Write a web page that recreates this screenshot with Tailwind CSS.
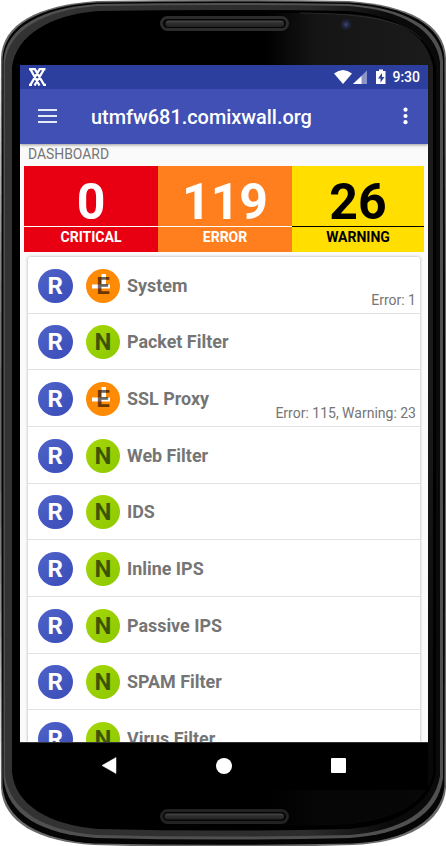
<!DOCTYPE html>
<html lang="en">
<head>
<meta charset="utf-8">
<title>Dashboard</title>
<script src="https://cdn.jsdelivr.net/npm/@tailwindcss/browser@4"></script>
</head>
<body class="bg-white overflow-hidden">
<div class="relative w-[446px] h-[846px] overflow-hidden font-[Roboto,'Noto_Sans',sans-serif]">
  <svg class="absolute inset-0" width="446" height="846" viewBox="0 0 446 846">
    <defs>
      <linearGradient id="face" x1="0" x2="1" y1="0" y2="0">
        <stop offset="0" stop-color="#000"/><stop offset=".6" stop-color="#000"/><stop offset=".72" stop-color="#151515"/><stop offset="1" stop-color="#1b1b1b"/>
      </linearGradient>
      <linearGradient id="fade" x1="0" x2="0" y1="0" y2="1">
        <stop offset="0" stop-color="#000" stop-opacity="0"/><stop offset=".45" stop-color="#000" stop-opacity="0"/><stop offset=".95" stop-color="#000" stop-opacity=".75"/>
      </linearGradient>
      <linearGradient id="pill" x1="0" x2="0" y1="0" y2="1">
        <stop offset="0" stop-color="#484848"/><stop offset=".4" stop-color="#303030"/><stop offset="1" stop-color="#222"/>
      </linearGradient>
      <linearGradient id="rim" x1="0" x2="1" y1="0" y2="0">
        <stop offset="0" stop-color="#333"/><stop offset=".7" stop-color="#2c2c2c"/><stop offset=".88" stop-color="#0a0a0a"/><stop offset="1" stop-color="#0a0a0a"/>
      </linearGradient>
      <radialGradient id="lens"><stop offset="0" stop-color="#40486e"/><stop offset=".5" stop-color="#20263f"/><stop offset="1" stop-color="#16171c"/></radialGradient>
    </defs>
    <path d="M97 1Q223-1 349 1C408 5 445 24 446 58Q447 423 446 788C443 822 408 843 352 845Q223 849 94 845C38 842 3 822 1 788Q-1 423 1 58C2 24 38 5 97 1Z" fill="#6a6a6a"/>
    <path d="M97 2.500Q223 .5 349 2.500C406 6 443 25 444.500 59Q445.500 423 444.500 786C441 820 406 841 352 843.500Q223 846 94 843.500C40 840 5 820 2.500 786Q.5 423 2.500 59C4 25 40 6 97 2.500Z" fill="#050505"/>
    <path d="M97 4Q223 2 349 4C404 8 440 27 443 60V778C438 815 404 834 350 838Q223 841 96 838C42 834 7 815 3.500 778V60C6 27 42 8 97 4Z" fill="#505050"/>
    <path d="M97 6Q223 4 349 6C401 10 436 29 440 62V776C434 811 401 831 350 835Q223 838 96 835C45 831 10 811 5 776V62C9 29 45 10 97 6Z" fill="url(#rim)"/>
    <path d="M98 11Q223 9 348 11C397 15 430 36 436 67V772C430 805 398 825 348 829Q223 832 98 829C49 825 15 805 12 772V67C16 36 49 15 98 11Z" fill="#000"/>
    <path d="M98 14Q223 11 348 14C398 17 427 34 433 67V772C428 800 398 819 348 824Q223 828 98 824C50 819 17 800 13 772V67C16 34 50 17 98 14Z" fill="url(#face)"/>
    <path d="M98 14Q223 11 348 14C398 17 427 34 433 67V772C428 800 398 819 348 824Q223 828 98 824C50 819 17 800 13 772V67C16 34 50 17 98 14Z" fill="url(#fade)"/>
    <path d="M300 13Q400 13 421 39" fill="none" stroke="#333" stroke-width=".7"/>
    <rect x="161.500" y="17.500" width="126" height="12" rx="6" fill="#050505" stroke="#2c2c2c" stroke-width="3"/>
    <rect x="165.500" y="20.500" width="118.500" height="6.500" rx="3.200" fill="url(#pill)"/>
    <rect x="161.500" y="810.500" width="126" height="12" rx="6" fill="#050505" stroke="#222" stroke-width="3"/>
    <rect x="164.500" y="813.500" width="119.500" height="6" rx="3" fill="url(#pill)"/>
    <circle cx="346" cy="24.500" r="6" fill="url(#lens)"/>
  </svg>

  <div class="relative ml-[20px] mt-[65px] w-[408px] h-[725px] flex flex-col bg-[#fafafa] overflow-hidden">
    <header class="relative z-10 shrink-0 shadow-[0_1px_3px_rgba(0,0,0,0.4)]">
      <div class="h-[24px] bg-[#2d3f9e] flex items-center text-white">
        <svg class="ml-[8px]" width="19" height="18" viewBox="0 0 19 18" fill="none" stroke="#fff" stroke-width="2.300"><path d="M2 .5L11.500 17.500M6.500 .5L16.500 17.500M16.500 .5L6.500 17.500M12 .5L2 17.500M1 1h6M11.500 1h6M1 17h3M15 17h3"/></svg>
        <svg class="ml-auto" width="52" height="18" viewBox="0 0 52 18"><path d="M0 5.500Q9 -1.500 18 5.500L9 16Z" fill="#fff"/><path d="M33 2.500V16H19Z" fill="#fff" fill-opacity=".45"/><path d="M27.500 8V16H19Z" fill="#fff"/><path d="M42 3h3V1.500h4V3h2.500v13H42Z" fill="#fff"/><path d="M48 5l-4 5.500h2.500v4l4-5.500h-2.500Z" fill="#2d3f9e"/></svg>
        <span class="ml-[6px] mr-[8px] text-[14px] font-medium leading-[24px]">9:30</span>
      </div>
      <div class="h-[55px] bg-[#4050b5] flex items-center text-white">
        <svg class="ml-[18px] -mt-[2px]" width="19" height="14" viewBox="0 0 19 14" stroke="#e8eaf6" stroke-width="1.8"><path d="M0 1h19M0 7h19M0 13h19"/></svg>
        <h1 class="ml-[34px] text-[19.9px] font-medium leading-[24px] pt-[2px]">utmfw681.comixwall.org</h1>
        <svg class="ml-auto mr-[20px] -mt-[2px]" width="5" height="18" viewBox="0 0 5 18" fill="#fff"><circle cx="2.500" cy="2.700" r="2.100"/><circle cx="2.500" cy="9" r="2.100"/><circle cx="2.500" cy="15.200" r="2.100"/></svg>
      </div>
    </header>
    <div class="h-[22px] shrink-0 pl-[8px] text-[13.9px] leading-[20px] text-[#757575]">DASHBOARD</div>
    <section class="ml-[4px] w-[400px] h-[86px] shrink-0 grid grid-cols-[134px_134px_132px] text-center font-bold">
      <div class="bg-[#e80012] text-white"><div class="h-[61px] border-b border-white text-[50px] leading-[72px]">0</div><div class="text-[14px] leading-[20px]">CRITICAL</div></div>
      <div class="bg-[#ff7f1e] text-white"><div class="h-[61px] border-b border-white text-[50px] leading-[72px]">119</div><div class="text-[14px] leading-[20px]">ERROR</div></div>
      <div class="bg-[#ffde00] text-black"><div class="h-[61px] border-b border-black text-[50px] leading-[72px]">26</div><div class="text-[14px] leading-[20px]">WARNING</div></div>
    </section>
    <main id="list" class="ml-[8px] mt-[5px] w-[392px] h-[485px] shrink-0 bg-white rounded-t-[2px] overflow-hidden shadow-[0_0_3px_rgba(0,0,0,0.35)]"></main>
    <nav class="h-[48px] shrink-0 bg-black border-t border-[#333] flex items-center justify-between pl-[82px] pr-[82px] pb-[2px]">
      <svg width="15" height="17" viewBox="0 0 15 17" fill="#fff"><path d="M0 8.500L14 .5V16.500Z" stroke="#fff" stroke-width=".5" stroke-linejoin="round"/></svg>
      <div class="w-[16px] h-[16px] rounded-full bg-white"></div>
      <div class="w-[15px] h-[15px] rounded-[1px] bg-white"></div>
    </nav>
  </div>
</div>
<script>
const rows = [['System','E','Error: 1'],['Packet Filter','N',''],['SSL Proxy','E','Error: 115, Warning: 23'],['Web Filter','N',''],['IDS','N',''],['Inline IPS','N',''],['Passive IPS','N',''],['SPAM Filter','N',''],['Virus Filter','N','']];
const plus = '<svg class="absolute inset-0" width="34" height="34" viewBox="0 0 34 34" fill="#fff"><path d="M15.500 5h4.500v10.500H24v4H6v-4h9.500Z"/></svg>';
document.getElementById('list').innerHTML = rows.map(([n, s, m]) => `
<div class="relative h-[56.66px] border-b border-[#e3e3e3] flex items-center pl-[10px] pt-[2px]">
  <div class="w-[34.5px] h-[34px] rounded-full bg-linear-to-br from-[#4f63c9] to-[#3a4cb8] text-white text-[24px] leading-[35px] font-bold text-center">R</div>
  <div class="relative ml-[13.5px] w-[34px] h-[34px] rounded-full ${s === 'E' ? 'bg-[#ff8a05]' : 'bg-linear-to-br from-[#a6d80a] to-[#8cc800]'} text-[24px] leading-[35px] font-bold text-center">${s === 'E' ? plus : ''}<span class="relative text-black/60">${s}</span></div>
  <span class="ml-[7px] text-[17.9px] leading-[22px] font-bold text-[#757575]">${n}</span>
  <span class="absolute right-[4px] bottom-[4px] text-[14px] leading-[18px] text-[#757575]">${m}</span>
</div>`).join('');
</script>
</body>
</html>
